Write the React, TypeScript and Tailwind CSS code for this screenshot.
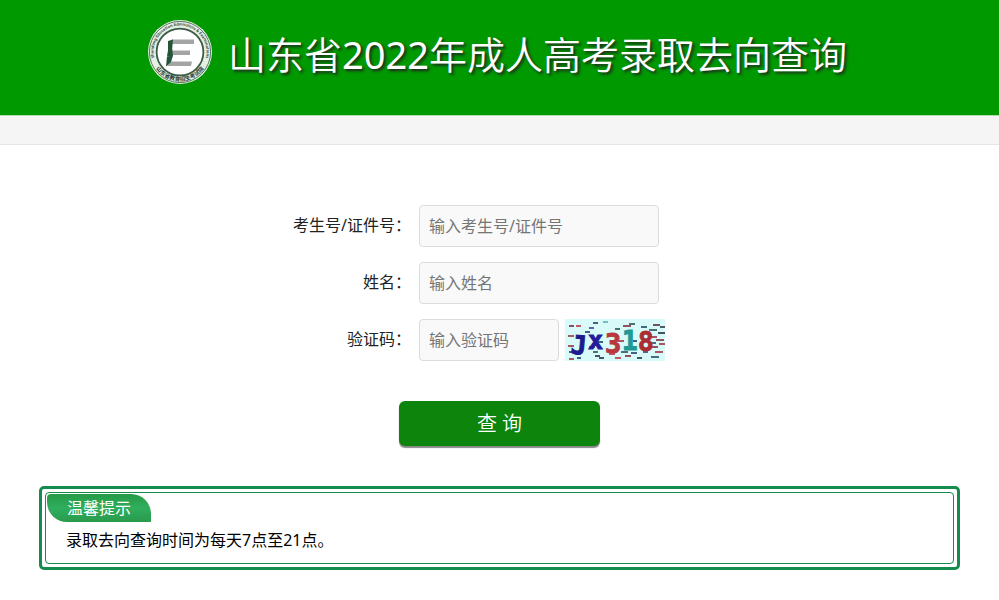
import { useState } from "react";
import type { FormEvent, InputHTMLAttributes, ReactNode } from "react";

function Logo() {
  return (
    <svg viewBox="0 0 64 64" className="size-16 shrink-0 overflow-visible" aria-label="山东省教育招生考试院">
      <defs>
        <path id="ring-top" d="M 8 43 A 26.400 26.400 0 1 1 56 43" />
        <path id="ring-bottom" d="M 6 45 A 29 29 0 0 0 58 45" />
      </defs>
      <circle cx="32" cy="32" r="32" fill="#e4efe4" />
      <circle cx="32" cy="32" r="30.6" fill="none" stroke="#4d6a55" strokeWidth="0.9" />
      <circle cx="32" cy="32" r="23.4" fill="#fff" stroke="#3c5a48" strokeWidth="1.8" />
      <text className="font-['Noto_Sans']" fontSize="3.900" fontWeight="700" fill="#35493c">
        <textPath href="#ring-top" startOffset="50%" textAnchor="middle">
          Shandong Education Admissions & Examinations
        </textPath>
      </text>
      <text className="font-['Noto_Sans_CJK_SC']" fontSize="5.6" fontWeight="700" fill="#26382d">
        <textPath href="#ring-bottom" startOffset="50%" textAnchor="middle">
          山东省教育招生考试院
        </textPath>
      </text>
      {/* E mark */}
      <path d="M24 19.500h22v4.500H23z" fill="#a3a5a4" />
      <path d="M24 30.500h18v4.500H23z" fill="#a3a5a4" />
      <path d="M22 41.500h22l-1 4.500H19z" fill="#a3a5a4" />
      <path d="M20 21l5-1.500-.8 8.800.8 7.600-6 .4 1-6z" fill="#24543a" />
      <path d="M19 36.500l6-1-2 6.500-5 4.600z" fill="#24543a" />
    </svg>
  );
}

const noise = [
  [4, 7, 5, "#7a2030"], [11, 7, 5, "#c03048"], [28, 4, 5, "#203a68"], [38, 3, 5, "#5ab0b0"],
  [24, 9, 5, "#3c3c96"], [20, 13, 5, "#203a68"], [50, 10, 5, "#23534a"], [58, 7, 8, "#802838"],
  [64, 5, 6, "#23534a"], [76, 8, 6, "#1d4a5a"], [88, 6, 7, "#5a2a38"], [95, 8, 5, "#2a3440"],
  [84, 11, 8, "#23534a"], [93, 14, 7, "#222c40"], [3, 17, 6, "#a03040"], [86, 18, 6, "#a02c3c"],
  [91, 21, 8, "#802838"], [84, 24, 7, "#1d4a5a"], [94, 25, 6, "#a02c3c"], [3, 27, 6, "#a03040"],
  [4, 33, 6, "#203a68"], [24, 28, 6, "#3c3c96"], [33, 23, 5, "#203a68"], [53, 22, 6, "#a03040"],
  [28, 33, 5, "#23534a"], [86, 28, 7, "#802838"], [68, 22, 4, "#203a68"], [56, 33, 7, "#23534a"],
  [44, 35, 6, "#c03048"], [66, 34, 6, "#203a68"], [78, 33, 5, "#27427a"], [90, 33, 8, "#a02c3c"],
  [4, 40, 5, "#a03040"], [12, 39, 4, "#203a68"], [30, 37, 5, "#222c40"], [34, 39, 5, "#222c40"],
  [50, 39, 6, "#c03048"], [60, 37, 6, "#802838"], [72, 39, 5, "#222c40"], [86, 38, 8, "#1d4a5a"],
] as const;

function Captcha() {
  return (
    <svg viewBox="0 0 100 42" className="h-[42px] w-[100px]" aria-hidden="true">
      <rect width="100" height="42" fill="#d8fbf9" />
      {noise.map(([x, y, w, color]) => (
        <path key={`${x}-${y}`} d={`M${x} ${y}h${w}`} stroke={color} strokeWidth="1.600" />
      ))}
      <g className="font-['DejaVu_Sans_Mono']" fontWeight="700" strokeWidth="1">
        <text x="6" y="35" fontSize="26" fill="#1c1c8c" stroke="#1c1c8c" transform="rotate(5 12 26)">J</text>
        <text x="23" y="30" fontSize="25" fill="#241c9c" stroke="#241c9c">x</text>
        <text x="40" y="34" fontSize="27" fill="#b8383e" stroke="#b8383e">3</text>
        <text x="57" y="31" fontSize="26" fill="#229a94" stroke="#229a94">1</text>
        <text x="73" y="32" fontSize="26" fill="#ac2c34" stroke="#ac2c34">8</text>
      </g>
    </svg>
  );
}

type FieldProps = InputHTMLAttributes<HTMLInputElement> & {
  id: string;
  label: string;
  children?: ReactNode;
};

function Field({ id, label, children, className = "w-60", ...rest }: FieldProps) {
  return (
    <div className="flex items-center gap-2">
      <label htmlFor={id} className="w-[162px] shrink-0 pb-0.5 text-right text-[#222]">
        {label}：
      </label>
      <div className="flex items-center gap-1.5">
        <input
          id={id}
          name={id}
          type="text"
          autoComplete="off"
          className={`h-[42px] rounded border border-[#dcdcdc] bg-[#f9f9f9] px-[9px] text-[#333] outline-none placeholder:text-[#757575] focus:border-[#009900] ${className}`}
          {...rest}
        />
        {children}
      </div>
    </div>
  );
}

export default function App() {
  const [form, setForm] = useState({ ksh: "", xm: "", yzm: "" });

  const update = (key: keyof typeof form) => (e: { target: { value: string } }) =>
    setForm({ ...form, [key]: e.target.value });

  const handleSubmit = (e: FormEvent) => {
    e.preventDefault();
  };

  return (
    <div className="min-h-screen bg-white font-['Noto_Sans','Noto_Sans_CJK_SC',sans-serif] text-base leading-6 text-black">
      <header className="flex justify-center gap-4 border-b border-[#b5dcb0] bg-[#009900] pt-5 pr-1 pb-[27px]">
        <Logo />
        <h1 className="text-[38px] leading-[68px] font-[350] whitespace-nowrap text-white [text-shadow:2px_2px_3px_#222]">
          山东省<span className="font-normal">2022</span>年成人高考录取去向查询
        </h1>
      </header>
      <div className="h-[29px] border-b border-[#e5e5e5] bg-[#f5f5f5]" />

      <main className="px-5 pt-15">
        <form onSubmit={handleSubmit}>
          <div className="mx-auto flex w-[501px] flex-col gap-[15px]">
            <Field
              id="ksh"
              label="考生号/证件号"
              placeholder="输入考生号/证件号"
              value={form.ksh}
              onChange={update("ksh")}
            />
            <Field id="xm" label="姓名" placeholder="输入姓名" value={form.xm} onChange={update("xm")} />
            <Field
              id="yzm"
              label="验证码"
              placeholder="输入验证码"
              className="w-35"
              value={form.yzm}
              onChange={update("yzm")}
            >
              <button type="button" aria-label="换一张" className="cursor-pointer">
                <Captcha />
              </button>
            </Field>
          </div>
          <button
            type="submit"
            className="mx-auto mt-10 block h-[45px] w-[201px] cursor-pointer rounded-md bg-[#0d850d] text-xl font-[350] text-white shadow-[0_2px_1px_#888]"
          >
            查 询
          </button>
        </form>

        {/* Notice */}
        <section className="mx-auto mt-10 max-w-[921px] rounded-[5px] border-3 border-[#138c4d] p-[3px]">
          <div className="rounded border border-[#138c4d] p-px pb-[11px]">
            <h2 className="inline-block rounded-tl-sm rounded-tr-[20px] rounded-bl-[20px] bg-linear-to-b from-[#269a46] via-[#2fae5e] to-[#2a9a4c] px-5 pt-0.5 pb-0.5 align-top text-white">
              温馨提示
            </h2>
            <p className="px-[19px] pt-1.5">录取去向查询时间为每天7点至21点。</p>
          </div>
        </section>
      </main>
    </div>
  );
}
